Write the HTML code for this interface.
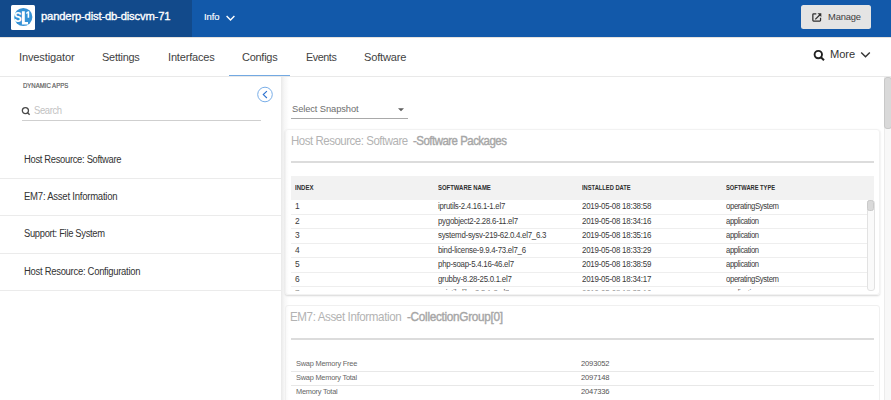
<!DOCTYPE html>
<html><head><meta charset="utf-8">
<style>
html,body{margin:0;padding:0;width:891px;height:400px;overflow:hidden;background:#fff;}
body{position:relative;font-family:"Liberation Sans", sans-serif;}
.a{position:absolute;}
.t{position:absolute;white-space:nowrap;line-height:1;font-family:"Liberation Sans", sans-serif;}
.t b{font-weight:700;}
</style></head><body>
<!-- header -->
<div class="a" style="left:0;top:0;width:891px;height:37px;background:#1259aa"></div>
<div class="a" style="left:0;top:0;width:192px;height:37px;background:#124a8b"></div>
<div class="a" style="left:11px;top:5px;width:24px;height:24.5px;background:#fff;border-radius:1.5px"></div>
<svg class="a" style="left:11px;top:5px" width="24" height="25" viewBox="0 0 24 25">
  <circle cx="12.3" cy="12" r="9.1" fill="#3592d6"/>
  <text x="3.9" y="17.2" transform="scale(0.8,1)" font-family="Liberation Sans" font-weight="700" font-size="14.4" fill="#fff">S</text>
  <path d="M10.9 6.3 H13.8 V17.1 H17 V19.4 H10.9 Z" fill="#fff"/>
  <path d="M15.2 7.4 L17 6.2 H18.2 V12.8 H16.6 V8.3 L15.2 9 Z" fill="#fff"/>
</svg>
<svg class="a" style="left:225px;top:14px" width="12" height="8" viewBox="0 0 12 8">
  <polyline points="1.6,2.1 5.5,5.9 9.4,2.1" fill="none" stroke="#fff" stroke-width="1.45"/>
</svg>
<div class="a" style="left:801px;top:5.2px;width:70px;height:24.1px;background:#e4e4e4;border-radius:2.5px"></div>
<svg class="a" style="left:811px;top:12px" width="12" height="11" viewBox="0 0 12 11">
  <path d="M5.3 1.85 H2.6 Q1.85 1.85 1.85 2.6 V8.3 Q1.85 9.05 2.6 9.05 H8.8 Q9.55 9.05 9.55 8.3 V5.8" fill="none" stroke="#2e2e2e" stroke-width="1.25"/>
  <path d="M4.3 7.4 L9.2 2.5" fill="none" stroke="#2e2e2e" stroke-width="1.25"/>
  <polygon points="6.5,1.3 10.3,1.3 10.3,5.1" fill="#2e2e2e"/>
</svg>
<!-- tab bar -->
<div class="a" style="left:0;top:37px;width:891px;height:1px;background:#e6e2de"></div>
<div class="a" style="left:0;top:76px;width:891px;height:1px;background:#e9e9e9"></div>
<div class="a" style="left:229px;top:74.8px;width:61px;height:1.5px;background:#73a9e2"></div>
<svg class="a" style="left:812px;top:48.6px" width="14" height="14" viewBox="0 0 14 14">
  <circle cx="6.3" cy="5.6" r="3.7" fill="none" stroke="#222" stroke-width="1.9"/>
  <line x1="8.9" y1="8.3" x2="12" y2="11.3" stroke="#222" stroke-width="2"/>
</svg>
<svg class="a" style="left:860px;top:51px" width="12" height="8" viewBox="0 0 12 8">
  <polyline points="1.2,1.4 5.5,5.8 9.8,1.4" fill="none" stroke="#333" stroke-width="1.4"/>
</svg>
<!-- left panel -->
<svg class="a" style="left:20px;top:106px" width="12" height="11" viewBox="0 0 12 11">
  <circle cx="5.4" cy="4.6" r="3.05" fill="none" stroke="#4a4a4a" stroke-width="1.3"/>
  <line x1="7.6" y1="6.8" x2="9.6" y2="8.8" stroke="#4a4a4a" stroke-width="1.4"/>
</svg>
<div class="a" style="left:22px;top:120px;width:239px;height:1px;background:#cfcfcf"></div>
<svg class="a" style="left:256px;top:85.5px" width="18" height="18" viewBox="0 0 18 18">
  <circle cx="9" cy="8.5" r="7.3" fill="none" stroke="#79aee8" stroke-width="1"/>
  <polyline points="10.9,5.2 7.3,8.6 10.9,12" fill="none" stroke="#2f73d0" stroke-width="1.15"/>
</svg>
<div class="a" style="left:0;top:178px;width:281px;height:1px;background:#ebebeb"></div>
<div class="a" style="left:0;top:215px;width:281px;height:1px;background:#ebebeb"></div>
<div class="a" style="left:0;top:253px;width:281px;height:1px;background:#ebebeb"></div>
<div class="a" style="left:0;top:290px;width:281px;height:1px;background:#ebebeb"></div>
<div class="a" style="left:281px;top:77px;width:8px;height:323px;background:linear-gradient(to right,#e9e9e9,#f6f6f6 40%,rgba(255,255,255,0))"></div>
<!-- right panel -->
<div class="a" style="left:291px;top:118px;width:117px;height:1px;background:#a9a9a9"></div>
<svg class="a" style="left:396.6px;top:107px" width="8" height="5" viewBox="0 0 8 5">
  <polygon points="1,1.2 7,1.2 4,4.2" fill="#5e5e5e"/>
</svg>
<div class="a" style="left:285px;top:128.5px;width:593px;height:164.5px;border:1px solid #f2f2f2;border-radius:3px;box-shadow:0 1px 2px rgba(0,0,0,0.16)"></div>
<div class="a" style="left:291px;top:161px;width:583px;height:2.2px;background:#dcdcdc"></div>
<div class="a" style="left:291px;top:175.5px;width:583px;height:24.2px;background:#f2f2f2"></div>
<div class="a" style="left:291px;top:213.5px;width:576px;height:1px;background:#eeeeee"></div>
<div class="a" style="left:291px;top:228px;width:576px;height:1px;background:#eeeeee"></div>
<div class="a" style="left:291px;top:242.5px;width:576px;height:1px;background:#eeeeee"></div>
<div class="a" style="left:291px;top:257px;width:576px;height:1px;background:#eeeeee"></div>
<div class="a" style="left:291px;top:271.5px;width:576px;height:1px;background:#eeeeee"></div>
<div class="a" style="left:291px;top:286px;width:576px;height:1px;background:#eeeeee"></div>
<div class="a" style="left:867px;top:199.7px;width:5.5px;height:89.5px;border:0.6px solid #e2e2e2;border-radius:3px;background:#fafafa"></div>
<div class="a" style="left:867px;top:200px;width:5.4px;height:8.6px;border:0.6px solid #cacaca;border-radius:2.5px;background:#d9d9d9"></div>
<div class="a" style="left:285px;top:304.8px;width:593px;height:120px;border:1px solid #f0f0f0;border-radius:3px;"></div>
<div class="a" style="left:291px;top:337.5px;width:583px;height:2.2px;background:#dcdcdc"></div>
<div class="a" style="left:291px;top:371px;width:583px;height:1px;background:#e8e8e8"></div>
<div class="a" style="left:291px;top:385px;width:583px;height:1px;background:#e8e8e8"></div>
<!-- main scrollbar -->
<div class="a" style="left:883.5px;top:77px;width:7.5px;height:323px;background:#f8f8f8;border-left:1px solid #ececec"></div>
<div class="a" style="left:884px;top:77px;width:6px;height:49.5px;background:#d9d9d9;border:0.6px solid #c8c8c8;border-radius:3px"></div>
<div class="t" style="left:40.70px;top:10.38px;font-size:11.6px;color:#ffffff;font-weight:400;letter-spacing:-0.181px;-webkit-text-stroke:0.35px #fff;transform:scaleX(0.9695);transform-origin:0 0">panderp-dist-db-discvm-71</div>
<div class="t" style="left:203.80px;top:12.36px;font-size:9.5px;color:#ffffff;font-weight:400;letter-spacing:-0.044px;-webkit-text-stroke:0.15px #fff;transform:scaleX(0.9918);transform-origin:0 0">Info</div>
<div class="t" style="left:827.90px;top:12.17px;font-size:9.6px;color:#3d3d3d;font-weight:400;letter-spacing:-0.171px;transform:scaleX(0.9759);transform-origin:0 0">Manage</div>
<div class="t" style="left:19.20px;top:51.55px;font-size:11.4px;color:#424242;font-weight:400;letter-spacing:-0.149px;transform:scaleX(0.9729);transform-origin:0 0">Investigator</div>
<div class="t" style="left:102.40px;top:51.55px;font-size:11.4px;color:#424242;font-weight:400;letter-spacing:-0.251px;transform:scaleX(0.9591);transform-origin:0 0">Settings</div>
<div class="t" style="left:167.70px;top:51.55px;font-size:11.4px;color:#424242;font-weight:400;letter-spacing:-0.186px;transform:scaleX(0.9677);transform-origin:0 0">Interfaces</div>
<div class="t" style="left:241.70px;top:51.55px;font-size:11.4px;color:#424242;font-weight:400;letter-spacing:-0.253px;transform:scaleX(0.9621);transform-origin:0 0">Configs</div>
<div class="t" style="left:305.50px;top:51.55px;font-size:11.4px;color:#424242;font-weight:400;letter-spacing:-0.428px;transform:scaleX(0.9422);transform-origin:0 0">Events</div>
<div class="t" style="left:363.70px;top:51.55px;font-size:11.4px;color:#424242;font-weight:400;letter-spacing:-0.180px;transform:scaleX(0.9727);transform-origin:0 0">Software</div>
<div class="t" style="left:829.80px;top:48.62px;font-size:11.2px;color:#333333;font-weight:400;letter-spacing:-0.067px;transform:scaleX(0.9922);transform-origin:0 0">More</div>
<div class="t" style="left:22.90px;top:83.11px;font-size:6.6px;color:#5c5c5c;font-weight:400;letter-spacing:0.000px;-webkit-text-stroke:0.2px #5c5c5c;transform:scaleX(0.9137);transform-origin:0 0">DYNAMIC APPS</div>
<div class="t" style="left:34.00px;top:105.55px;font-size:10.1px;color:#c2c2c2;font-weight:400;letter-spacing:-0.414px;transform:scaleX(0.9393);transform-origin:0 0">Search</div>
<div class="t" style="left:23.70px;top:154.53px;font-size:10px;color:#333333;font-weight:400;letter-spacing:-0.331px;transform:scaleX(0.9385);transform-origin:0 0">Host Resource: Software</div>
<div class="t" style="left:23.70px;top:191.53px;font-size:10px;color:#333333;font-weight:400;letter-spacing:-0.245px;transform:scaleX(0.9527);transform-origin:0 0">EM7: Asset Information</div>
<div class="t" style="left:23.70px;top:229.03px;font-size:10px;color:#333333;font-weight:400;letter-spacing:-0.332px;transform:scaleX(0.9364);transform-origin:0 0">Support: File System</div>
<div class="t" style="left:23.70px;top:266.54px;font-size:10px;color:#333333;font-weight:400;letter-spacing:-0.288px;transform:scaleX(0.9440);transform-origin:0 0">Host Resource: Configuration</div>
<div class="t" style="left:291.50px;top:103.96px;font-size:9.5px;color:#6e6e6e;font-weight:400;letter-spacing:-0.094px;transform:scaleX(0.9813);transform-origin:0 0">Select Snapshot</div>
<div class="t" style="left:290.60px;top:134.50px;font-size:12.4px;color:#b3b3b3;font-weight:400;letter-spacing:-0.504px;transform:scaleX(0.9255);transform-origin:0 0">Host Resource: Software</div>
<div class="t" style="left:412.70px;top:134.50px;font-size:12.4px;color:#a6a6a6;font-weight:400;letter-spacing:-0.541px;-webkit-text-stroke:0.4px #a6a6a6;transform:scaleX(0.9234);transform-origin:0 0">-Software Packages</div>
<div class="t" style="left:294.75px;top:183.97px;font-size:7.0px;color:#2e2e2e;font-weight:700;letter-spacing:0.000px;transform:scaleX(0.8642);transform-origin:0 0">INDEX</div>
<div class="t" style="left:438.10px;top:183.97px;font-size:7.0px;color:#2e2e2e;font-weight:700;letter-spacing:0.000px;transform:scaleX(0.8484);transform-origin:0 0">SOFTWARE NAME</div>
<div class="t" style="left:582.30px;top:183.97px;font-size:7.0px;color:#2e2e2e;font-weight:700;letter-spacing:0.000px;transform:scaleX(0.8203);transform-origin:0 0">INSTALLED DATE</div>
<div class="t" style="left:726.20px;top:183.97px;font-size:7.0px;color:#2e2e2e;font-weight:700;letter-spacing:0.000px;transform:scaleX(0.8196);transform-origin:0 0">SOFTWARE TYPE</div>
<div class="t" style="left:295.00px;top:202.09px;font-size:8.4px;color:#3a3a3a;font-weight:400;letter-spacing:0.000px;">1</div>
<div class="t" style="left:438.10px;top:202.09px;font-size:8.4px;color:#3a3a3a;font-weight:400;letter-spacing:-0.269px;transform:scaleX(0.9297);transform-origin:0 0">iprutils-2.4.16.1-1.el7</div>
<div class="t" style="left:582.30px;top:202.09px;font-size:8.4px;color:#3a3a3a;font-weight:400;letter-spacing:-0.249px;transform:scaleX(0.9456);transform-origin:0 0">2019-05-08 18:38:58</div>
<div class="t" style="left:726.20px;top:202.09px;font-size:8.4px;color:#3a3a3a;font-weight:400;letter-spacing:-0.380px;transform:scaleX(0.9220);transform-origin:0 0">operatingSystem</div>
<div class="t" style="left:295.00px;top:216.59px;font-size:8.4px;color:#3a3a3a;font-weight:400;letter-spacing:0.000px;">2</div>
<div class="t" style="left:438.10px;top:216.59px;font-size:8.4px;color:#3a3a3a;font-weight:400;letter-spacing:-0.267px;transform:scaleX(0.9372);transform-origin:0 0">pygobject2-2.28.6-11.el7</div>
<div class="t" style="left:582.30px;top:216.59px;font-size:8.4px;color:#3a3a3a;font-weight:400;letter-spacing:-0.249px;transform:scaleX(0.9456);transform-origin:0 0">2019-05-08 18:34:16</div>
<div class="t" style="left:726.20px;top:216.59px;font-size:8.4px;color:#3a3a3a;font-weight:400;letter-spacing:-0.384px;transform:scaleX(0.9126);transform-origin:0 0">application</div>
<div class="t" style="left:295.00px;top:231.09px;font-size:8.4px;color:#3a3a3a;font-weight:400;letter-spacing:0.000px;">3</div>
<div class="t" style="left:438.10px;top:231.09px;font-size:8.4px;color:#3a3a3a;font-weight:400;letter-spacing:-0.266px;transform:scaleX(0.9392);transform-origin:0 0">systemd-sysv-219-62.0.4.el7_6.3</div>
<div class="t" style="left:582.30px;top:231.09px;font-size:8.4px;color:#3a3a3a;font-weight:400;letter-spacing:-0.249px;transform:scaleX(0.9456);transform-origin:0 0">2019-05-08 18:35:16</div>
<div class="t" style="left:726.20px;top:231.09px;font-size:8.4px;color:#3a3a3a;font-weight:400;letter-spacing:-0.384px;transform:scaleX(0.9126);transform-origin:0 0">application</div>
<div class="t" style="left:295.00px;top:245.59px;font-size:8.4px;color:#3a3a3a;font-weight:400;letter-spacing:0.000px;">4</div>
<div class="t" style="left:438.10px;top:245.59px;font-size:8.4px;color:#3a3a3a;font-weight:400;letter-spacing:-0.267px;transform:scaleX(0.9357);transform-origin:0 0">bind-license-9.9.4-73.el7_6</div>
<div class="t" style="left:582.30px;top:245.59px;font-size:8.4px;color:#3a3a3a;font-weight:400;letter-spacing:-0.249px;transform:scaleX(0.9456);transform-origin:0 0">2019-05-08 18:33:29</div>
<div class="t" style="left:726.20px;top:245.59px;font-size:8.4px;color:#3a3a3a;font-weight:400;letter-spacing:-0.384px;transform:scaleX(0.9126);transform-origin:0 0">application</div>
<div class="t" style="left:295.00px;top:260.09px;font-size:8.4px;color:#3a3a3a;font-weight:400;letter-spacing:0.000px;">5</div>
<div class="t" style="left:438.10px;top:260.09px;font-size:8.4px;color:#3a3a3a;font-weight:400;letter-spacing:-0.266px;transform:scaleX(0.9394);transform-origin:0 0">php-soap-5.4.16-46.el7</div>
<div class="t" style="left:582.30px;top:260.09px;font-size:8.4px;color:#3a3a3a;font-weight:400;letter-spacing:-0.249px;transform:scaleX(0.9456);transform-origin:0 0">2019-05-08 18:38:59</div>
<div class="t" style="left:726.20px;top:260.09px;font-size:8.4px;color:#3a3a3a;font-weight:400;letter-spacing:-0.384px;transform:scaleX(0.9126);transform-origin:0 0">application</div>
<div class="t" style="left:295.00px;top:274.59px;font-size:8.4px;color:#3a3a3a;font-weight:400;letter-spacing:0.000px;">6</div>
<div class="t" style="left:438.10px;top:274.59px;font-size:8.4px;color:#3a3a3a;font-weight:400;letter-spacing:-0.267px;transform:scaleX(0.9377);transform-origin:0 0">grubby-8.28-25.0.1.el7</div>
<div class="t" style="left:582.30px;top:274.59px;font-size:8.4px;color:#3a3a3a;font-weight:400;letter-spacing:-0.249px;transform:scaleX(0.9456);transform-origin:0 0">2019-05-08 18:34:17</div>
<div class="t" style="left:726.20px;top:274.59px;font-size:8.4px;color:#3a3a3a;font-weight:400;letter-spacing:-0.380px;transform:scaleX(0.9220);transform-origin:0 0">operatingSystem</div>
<div class="t" style="left:295.00px;top:289.09px;font-size:8.4px;color:#3a3a3a;font-weight:400;letter-spacing:0.000px;clip-path:inset(0 0 6.9px 0)">7</div>
<div class="t" style="left:438.10px;top:289.09px;font-size:8.4px;color:#3a3a3a;font-weight:400;letter-spacing:-0.269px;clip-path:inset(0 0 6.9px 0);transform:scaleX(0.9280);transform-origin:0 0">pciutils-libs-3.5.1-3.el7</div>
<div class="t" style="left:582.30px;top:289.09px;font-size:8.4px;color:#3a3a3a;font-weight:400;letter-spacing:-0.249px;clip-path:inset(0 0 6.9px 0);transform:scaleX(0.9456);transform-origin:0 0">2019-05-08 18:33:16</div>
<div class="t" style="left:726.20px;top:289.09px;font-size:8.4px;color:#3a3a3a;font-weight:400;letter-spacing:-0.384px;clip-path:inset(0 0 6.9px 0);transform:scaleX(0.9126);transform-origin:0 0">application</div>
<div class="t" style="left:290.40px;top:310.75px;font-size:12.4px;color:#b3b3b3;font-weight:400;letter-spacing:-0.417px;transform:scaleX(0.9360);transform-origin:0 0">EM7: Asset Information</div>
<div class="t" style="left:407.30px;top:310.75px;font-size:12.4px;color:#a6a6a6;font-weight:400;letter-spacing:-0.314px;-webkit-text-stroke:0.4px #a6a6a6;transform:scaleX(0.9496);transform-origin:0 0">-CollectionGroup[0]</div>
<div class="t" style="left:296.20px;top:359.60px;font-size:7.8px;color:#666666;font-weight:400;letter-spacing:-0.237px;transform:scaleX(0.9504);transform-origin:0 0">Swap Memory Free</div>
<div class="t" style="left:580.70px;top:359.60px;font-size:7.8px;color:#555555;font-weight:400;letter-spacing:-0.155px;transform:scaleX(0.9704);transform-origin:0 0">2093052</div>
<div class="t" style="left:296.20px;top:373.90px;font-size:7.8px;color:#666666;font-weight:400;letter-spacing:-0.238px;transform:scaleX(0.9473);transform-origin:0 0">Swap Memory Total</div>
<div class="t" style="left:580.70px;top:373.90px;font-size:7.8px;color:#555555;font-weight:400;letter-spacing:-0.155px;transform:scaleX(0.9704);transform-origin:0 0">2097148</div>
<div class="t" style="left:296.20px;top:388.20px;font-size:7.8px;color:#666666;font-weight:400;letter-spacing:-0.238px;transform:scaleX(0.9470);transform-origin:0 0">Memory Total</div>
<div class="t" style="left:580.70px;top:388.20px;font-size:7.8px;color:#555555;font-weight:400;letter-spacing:-0.155px;transform:scaleX(0.9704);transform-origin:0 0">2047336</div>
</body></html>
